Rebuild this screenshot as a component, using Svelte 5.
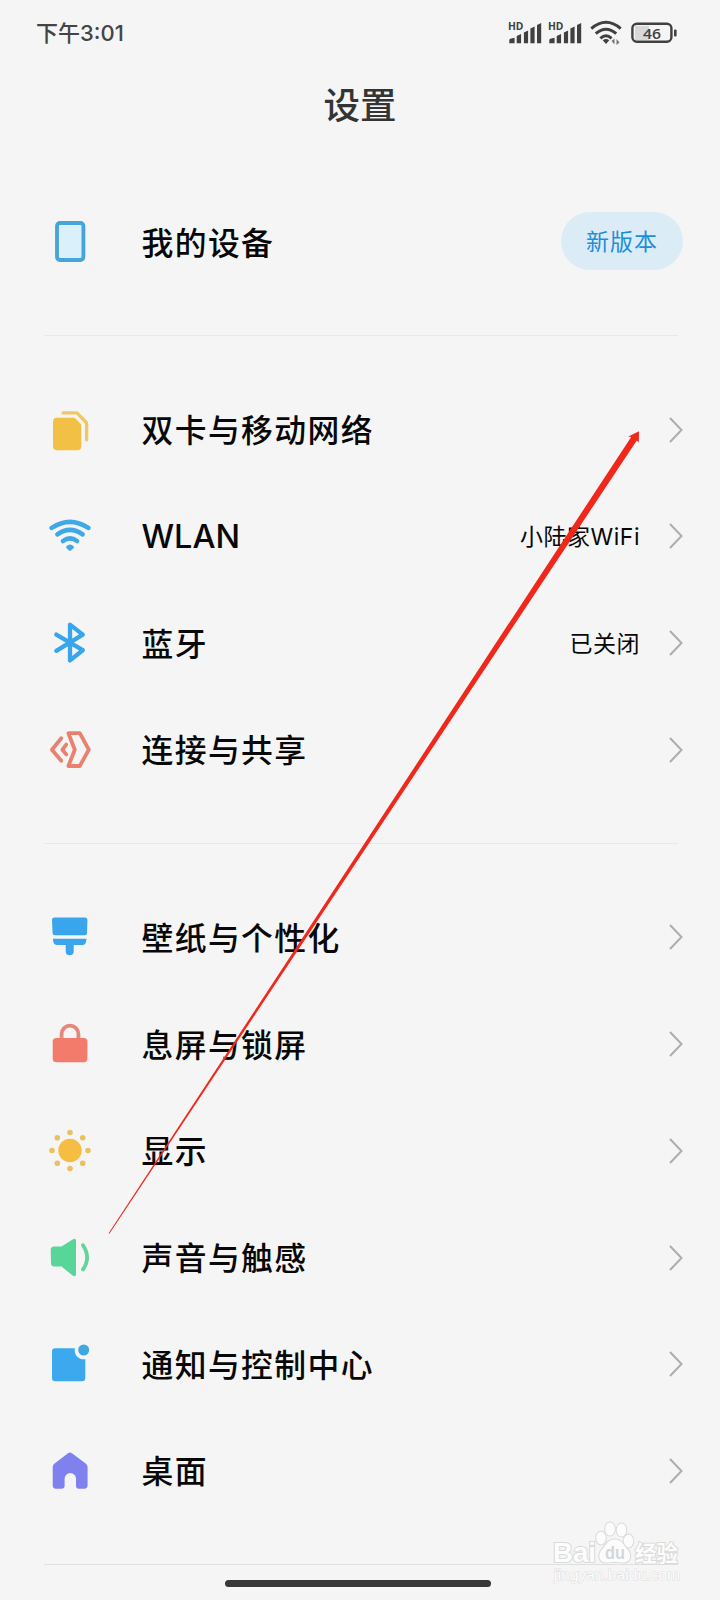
<script lang="ts">
  type Row = { icon: string; label: string; latin?: boolean; value?: string; badge?: string };

  const groups: Row[][] = [
    [{ icon: 'phone', label: '我的设备', badge: '新版本' }],
    [
      { icon: 'sim', label: '双卡与移动网络' },
      { icon: 'wifi', label: 'WLAN', latin: true, value: '小陆家WiFi' },
      { icon: 'bluetooth', label: '蓝牙', value: '已关闭' },
      { icon: 'share', label: '连接与共享' },
    ],
    [
      { icon: 'brush', label: '壁纸与个性化' },
      { icon: 'lock', label: '息屏与锁屏' },
      { icon: 'sun', label: '显示' },
      { icon: 'sound', label: '声音与触感' },
      { icon: 'notice', label: '通知与控制中心' },
      { icon: 'home', label: '桌面' },
    ],
  ];

  const rays = [[0, -18], [12.7, -12.7], [18, 0], [12.7, 12.7], [0, 18], [-12.7, 12.7], [-18, 0], [-12.7, -12.7]];
</script>

{#snippet signal()}
  <svg class="signal" viewBox="0 0 34 24">
    <text class="hd" x="0" y="8.8" textLength="15.5" lengthAdjust="spacingAndGlyphs">HD</text>
    <path d="M1.3 22.3V19q0-1 1-1.2l4.3-1v5.5zM8.7 22.3v-7.4l4.4-1.8v9.2zM15.9 22.3V11.4l4.2-2v12.9zM22.4 22.3V7.6l4.2-2v16.7zM29 22.3V4l4.2-2v20.3z" />
  </svg>
{/snippet}

{#snippet icon(name: string)}
  <svg class="icon" viewBox="0 0 48 48">
    {#if name === 'phone'}
      <rect x="11" y="5" width="26.4" height="37" rx="3" fill="#daf0fa" stroke="#45a5d9" stroke-width="3.8" />
    {:else if name === 'sim'}
      <path d="M11 11.8h16.5a3 3 0 0 1 2.1.9l4.8 4.8a3 3 0 0 1 .9 2.1v20.7a4 4 0 0 1-4 4H11a4 4 0 0 1-4-4V15.8a4 4 0 0 1 4-4z" fill="#f2c045" />
      <path d="M17 6.9h12.7q1.2 0 2 .8l8.1 8.3q.8.8.8 2v15.8" fill="none" stroke="#f0c766" stroke-width="3.3" stroke-linecap="round" />
    {:else if name === 'wifi'}
      <g fill="none" stroke="#3fa8e6" stroke-width="4.6" stroke-linecap="round">
        <path d="M5.6 15.9q18.4-12.2 36.8 0" />
        <path d="M11.4 22.3q12.6-9 25.2 0" />
        <path d="M17 29q7-5.4 14 0" />
      </g>
      <path d="M20.4 34.2q3.6-3.4 7.2 0 .8.9 0 1.9l-2.3 2.2q-1.3 1-2.6 0l-2.3-2.2q-.8-1 0-1.9z" fill="#3fa8e6" />
    {:else if name === 'bluetooth'}
      <path d="M10.3 15.6 36.8 31.2 24 41.4V5.6L36.8 15.6 10.3 31.8" fill="none" stroke="#38a5ec" stroke-width="4.3" stroke-linecap="round" stroke-linejoin="round" />
    {:else if name === 'share'}
      <g fill="none" stroke="#e8826f" stroke-width="3.8" stroke-linecap="round" stroke-linejoin="round">
        <path d="M15.3 12.2 5.9 23.7l9.4 11" />
        <path d="m20.2 18.6-3.8 5.1 3.8 4.7" />
        <path d="M22.4 7.2h11.4l9 16.5-9 16.3H22.4l6.4-16.3z" />
      </g>
    {:else if name === 'brush'}
      <path d="M8.6 4.6h30.2a2.6 2.6 0 0 1 2.6 2.6l-.4 13q-.1 2-2 2H8.6q-1.900 0-2-2L6 7.200A2.600 2.600 0 0 1 8.600 4.600zM6.900 25.800h33.700l-.6 3.200q-.6 3-3.600 3h-8.700v6.300a4 4 0 0 1-8 0V32H11q-3 0-3.600-3z" fill="#38a5ec" />
    {:else if name === 'lock'}
      <path d="M15.6 20v-6a8.4 8.4 0 0 1 16.8 0v6" fill="none" stroke="#e5877c" stroke-width="3.8" />
      <rect x="6.7" y="18" width="34.7" height="24.2" rx="3.6" fill="#f37b6c" />
    {:else if name === 'sun'}
      <circle cx="24" cy="23.5" r="11.7" fill="#f5bd41" />
      {#each rays as [x, y]}
        <circle cx={24 + x} cy={23.5 + y} r="2.8" fill="#e9c162" />
      {/each}
    {:else if name === 'sound'}
      <path d="M8.2 12.5h7.3L26.6 5.4q3.4-1.8 3.4 1.6v33q0 3.4-3.4 1.6L15.5 32.4H8.2q-3 0-3.2-3L4.7 15.5q.3-3 3.5-3z" fill="#58d699" />
      <path d="M37 11.2q8.2 12.5 0 24.2" fill="none" stroke="#63d59c" stroke-width="3.8" stroke-linecap="round" />
    {:else if name === 'notice'}
      <path d="M9.2 8.3h19.7a9 9 0 0 0 10.4 10.9v18.9a3.200 3.200 0 0 1-3.200 3.200H9.200A3.200 3.200 0 0 1 6 38.100V11.500a3.200 3.200 0 0 1 3.200-3.200z" fill="#3ca8ee" />
      <circle cx="37.7" cy="10" r="5.5" fill="#3fa8e4" />
    {:else if name === 'home'}
      <path d="M22 6.2q2-1.5 4 0l14 10.6q1.6 1.2 1.6 3.200v18.600q0 3.100-3.100 3.100H33q-3 0-3-3v-7a5.700 5.700 0 0 0-11.400 0v7q0 3-3 3H9.800q-3.100 0-3.100-3.100V20q0-2 1.600-3.200z" fill="#8180ef" />
    {/if}
  </svg>
{/snippet}

<div class="screen">
  <header class="status">
    <span class="time">下午3:01</span>
    <div class="indicators">
      {@render signal()}
      {@render signal()}
      <svg class="status-wifi" viewBox="0 0 32 24">
        <g fill="none" stroke="#404040" stroke-width="3">
          <path d="M1.3 7.6Q16-5 30.7 7.6" />
          <path d="M5.8 12.7q10.2-9 20.4 0" />
          <path d="M10.4 17.4q5.6-5.2 11.2 0" />
        </g>
        <path d="M12.7 19.2q3.3-2.6 6.6 0L16 23z" fill="#404040" />
        <path d="M24.5 17.5v6L21.5 20zM26.5 24v-6l3 3.5" fill="#777" />
      </svg>
      <svg class="battery" viewBox="0 0 46 22">
        <rect x="4" y="4" width="14" height="14" fill="#d8d8d8" />
        <rect x="1.4" y="1.8" width="39" height="18" rx="4.5" fill="none" stroke="#404040" stroke-width="2.4" />
        <rect x="43" y="7.5" width="2.6" height="7" rx="1" fill="#404040" />
        <text class="level" x="12" y="16.6" textLength="18" lengthAdjust="spacingAndGlyphs">46</text>
      </svg>
    </div>
  </header>

  <h1>设置</h1>

  <main>
    {#each groups as rows}
      <section>
        {#each rows as row}
          <div class="row">
            {@render icon(row.icon)}
            <span class="label" class:latin={row.latin}>{row.label}</span>
            {#if row.badge}
              <span class="badge">{row.badge}</span>
            {:else}
              {#if row.value}<span class="value">{row.value}</span>{/if}
              <svg class="chevron" viewBox="0 0 14 26">
                <path d="M1 1l11.5 12L1 25" />
              </svg>
            {/if}
          </div>
        {/each}
      </section>
    {/each}
  </main>

  <div class="home-bar"></div>

  <svg class="pointer" viewBox="0 0 720 1600">
    <path d="M108.6 1233.3 631.2 436.9l-2.9-.4L639 431.2l-.2 11.2-2-1.8L109.4 1233.8z" fill="#f0281c" />
  </svg>

  <svg class="watermark" viewBox="0 0 140 70">
    <g class="mark">
      <text class="brand" x="13" y="42" textLength="43" lengthAdjust="spacingAndGlyphs">Bai</text>
      <ellipse cx="61" cy="18" rx="4.8" ry="6.4" />
      <ellipse cx="70" cy="9" rx="4.8" ry="6.6" />
      <ellipse cx="81.5" cy="10" rx="4.8" ry="6.6" />
      <ellipse cx="88.5" cy="21" rx="4.8" ry="6.4" />
      <path d="M75 19.5c7 0 8.5 6 12.5 10s4 13-4 13c-3 0-5-.8-8.5-.8s-5.5.8-8.5.8c-8 0-9-8-4.5-13s6-10 13-10z" />
      <text class="brand cjk" x="95" y="40.5" textLength="43" lengthAdjust="spacingAndGlyphs">经验</text>
    </g>
    <text class="du" x="65" y="39" textLength="20" lengthAdjust="spacingAndGlyphs">du</text>
    <text class="site" x="14" y="59.5" textLength="126" lengthAdjust="spacingAndGlyphs">jingyan.baidu.com</text>
  </svg>
</div>

<style>
  :global(body) {
    margin: 0;
    background: #f5f5f5;
  }
  .screen {
    position: relative;
    display: flex;
    flex-direction: column;
    width: 720px;
    height: 1600px;
    overflow: hidden;
    background: #f5f5f5;
    color: #080808;
    font-family: "Noto Sans CJK SC", "Noto Sans", sans-serif;
  }
  svg { display: block; flex: none; overflow: visible; }

  .status {
    display: flex;
    align-items: center;
    justify-content: space-between;
    box-sizing: border-box;
    height: 66px;
    padding: 0 43.5px 0 36px;
    color: #444;
  }
  .time {
    padding-bottom: 4px;
    font-family: Inter, "Noto Sans CJK SC", sans-serif;
    font-size: 22px;
    font-weight: 500;
  }
  .indicators { display: flex; align-items: center; }
  .signal { width: 34px; height: 24px; margin-right: 6px; fill: #404040; }
  .hd { font: 700 10px "Open Sans", sans-serif; }
  .status-wifi { width: 32px; height: 24px; margin: 0 9px 0 2px; }
  .battery { width: 46px; height: 22px; }
  .level { font: 600 15px "Open Sans", sans-serif; fill: #404040; }

  h1 {
    margin: 0;
    height: 82.2px;
    line-height: 76px;
    text-align: center;
    font-size: 36.5px;
    font-weight: 500;
    color: #343434;
  }

  section {
    margin: 0 42px 0 44px;
    padding: 40.5px 0 39.5px;
    border-bottom: 1px solid #e9e9e9;
  }
  section:last-child { border-color: #dfdfdf; }
  .row {
    display: flex;
    align-items: center;
    height: 106.7px;
    margin: 0 -5px 0 2px;
  }
  .icon { width: 48px; height: 48px; }
  .label {
    flex: 1;
    margin-left: 47.5px;
    padding-bottom: 3px;
    font-size: 31.8px;
    letter-spacing: 1.4px;
    font-weight: 500;
  }
  .latin {
    padding: 1px 0 0;
    font-family: Inter, sans-serif;
    font-size: 32.5px;
    letter-spacing: 0;
  }
  .value {
    margin-right: 29px;
    padding-bottom: 3px;
    font-family: Inter, "Noto Sans CJK SC", sans-serif;
    font-size: 23px;
    letter-spacing: 0.5px;
  }
  .chevron { width: 14px; height: 26px; }
  .chevron path { fill: none; stroke: #adadad; stroke-width: 2; }
  .badge {
    width: 122px;
    height: 58px;
    margin-bottom: 2px;
    border-radius: 29px;
    background: #dcecf7;
    color: #1c8fd8;
    font-size: 23px;
    letter-spacing: 1px;
    line-height: 56px;
    text-align: center;
  }

  .home-bar {
    align-self: center;
    width: 266px;
    height: 7px;
    margin: 15px 0 0 -4px;
    border-radius: 4px;
    background: #383838;
  }

  /* red arrow lying over the list */
  .pointer {
    position: absolute;
    inset: 0;
    width: 720px;
    height: 1600px;
    pointer-events: none;
  }
  .watermark {
    position: absolute;
    left: 540px;
    top: 1520px;
    width: 140px;
    height: 70px;
  }
  .mark {
    fill: #fcfcfc;
    stroke: #dadada;
    stroke-width: 2px;
    paint-order: stroke;
  }
  .brand { font: 700 27px "Liberation Sans", sans-serif; }
  .cjk { font: 700 22px "Noto Sans CJK SC", sans-serif; }
  .du { font: 700 18px "Liberation Sans", sans-serif; fill: #d6d6d6; }
  .site {
    font: 15px "Liberation Sans", sans-serif;
    fill: #fcfcfc;
    stroke: #dedede;
    stroke-width: 1px;
    paint-order: stroke;
  }
</style>
